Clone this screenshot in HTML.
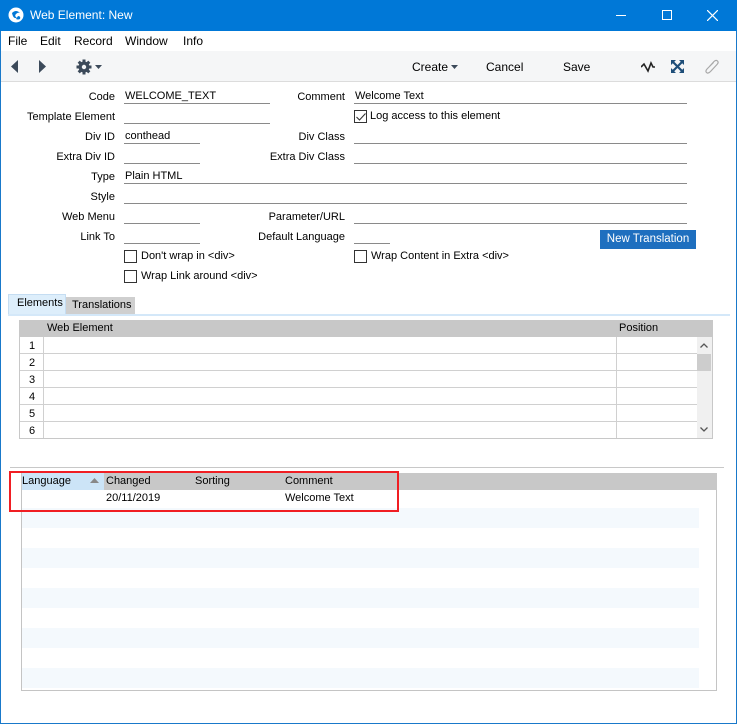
<!DOCTYPE html>
<html><head><meta charset="utf-8"><style>
*{margin:0;padding:0;box-sizing:border-box}
body{width:737px;height:724px;position:relative;overflow:hidden;background:#fff;font-family:"Liberation Sans",sans-serif;font-size:11px;color:#000}
.a{position:absolute;white-space:nowrap}
.lbl{position:absolute;text-align:right;white-space:nowrap;line-height:14px}
.f{position:absolute;border-bottom:1px solid #8a8a8a;height:14px;line-height:13px;padding-left:1px}
.cb{position:absolute;width:13px;height:13px;border:1px solid #333;background:#fff}
.hl{position:absolute;background:#c8c8c8}
</style></head><body>
<!-- window border -->
<div class="a" style="left:0;top:0;width:737px;height:724px;border:1px solid #1979ca"></div>
<!-- title -->
<div class="a" style="left:0;top:0;width:737px;height:31px;background:#0078d7"></div>
<svg class="a" style="left:8px;top:7px" width="16" height="16" viewBox="0 0 16 16"><circle cx="8" cy="8" r="7.5" fill="#fff"/><path d="M4 6 Q8 2 12 6 Q10 5 8 7 Q6 9 9 11 Q5 12 4 6Z" fill="#0078d7"/><path d="M10 9 Q13 9 12 12 Q10 13 8 12Z" fill="#0078d7"/></svg>
<div class="a" style="left:30px;top:8px;color:#fff;font-size:12px">Web Element: New</div>
<div class="a" style="left:616px;top:15px;width:10px;height:1px;background:#fff"></div>
<div class="a" style="left:662px;top:10px;width:10px;height:10px;border:1px solid #fff"></div>
<svg class="a" style="left:707px;top:10px" width="11" height="11"><path d="M0 0L11 11M11 0L0 11" stroke="#fff" stroke-width="1.2"/></svg>
<!-- menu -->
<div class="a" style="left:1px;top:31px;width:735px;height:20px;background:#fff"></div>
<div class="a" style="left:8px;top:34px;font-size:12px">File</div>
<div class="a" style="left:40px;top:34px;font-size:12px">Edit</div>
<div class="a" style="left:74px;top:34px;font-size:12px">Record</div>
<div class="a" style="left:125px;top:34px;font-size:12px">Window</div>
<div class="a" style="left:183px;top:34px;font-size:12px">Info</div>
<!-- toolbar -->
<div class="a" style="left:1px;top:51px;width:735px;height:31px;background:#f5f6f7;border-bottom:1px solid #dcdcdc"></div>
<svg class="a" style="left:11px;top:60px" width="8" height="13"><path d="M7 0V13L0 6.5Z" fill="#3c4a5a"/></svg>
<svg class="a" style="left:38px;top:60px" width="8" height="13"><path d="M1 0V13L8 6.5Z" fill="#3c4a5a"/></svg>
<svg class="a" style="left:76px;top:59px" width="16" height="16" viewBox="0 0 16 16"><circle cx="8" cy="8" r="5.5" fill="#3c4a5a"/><g stroke="#3c4a5a" stroke-width="3"><path d="M8 0.5V15.5M0.5 8H15.5M2.7 2.7L13.3 13.3M13.3 2.7L2.7 13.3"/></g><circle cx="8" cy="8" r="2.2" fill="#f5f6f7"/></svg>
<svg class="a" style="left:95px;top:65px" width="7" height="4"><path d="M0 0H7L3.5 4Z" fill="#3c4a5a"/></svg>
<div class="a" style="left:412px;top:60px;font-size:12px">Create</div>
<svg class="a" style="left:451px;top:65px" width="7" height="4"><path d="M0 0H7L3.5 4Z" fill="#3c4a5a"/></svg>
<div class="a" style="left:486px;top:60px;font-size:12px">Cancel</div>
<div class="a" style="left:563px;top:60px;font-size:12px">Save</div>
<svg class="a" style="left:641px;top:60px" width="14" height="13"><path d="M0 7L3 4L7 11L10 3L12 7H14" stroke="#222" stroke-width="1.6" fill="none"/></svg>
<svg class="a" style="left:671px;top:60px" width="13" height="13"><path d="M0 0H5L0 5ZM13 0V5L8 0ZM0 13V8L5 13ZM13 13H8L13 8Z" fill="#1e4e79"/><path d="M2 2L11 11M11 2L2 11" stroke="#1e4e79" stroke-width="2.2"/></svg>
<svg class="a" style="left:705px;top:58px" width="14" height="17" viewBox="0 0 14 17"><path d="M4 9L9 3.5Q11 1.5 12.5 3Q14 4.5 12 6.5L5.5 13.5Q3 16 1.5 14.5Q0 13 2.5 10.5L8.5 4.5" stroke="#a8a8a8" stroke-width="1.2" fill="none"/></svg>
<!-- form left -->
<div class="lbl" style="right:622px;top:90px">Code</div><div class="f" style="left:124px;top:90px;width:146px">WELCOME_TEXT</div>
<div class="lbl" style="right:622px;top:110px">Template Element</div><div class="f" style="left:124px;top:110px;width:146px"></div>
<div class="lbl" style="right:622px;top:130px">Div ID</div><div class="f" style="left:124px;top:130px;width:76px">conthead</div>
<div class="lbl" style="right:622px;top:150px">Extra Div ID</div><div class="f" style="left:124px;top:150px;width:76px"></div>
<div class="lbl" style="right:622px;top:170px">Type</div><div class="f" style="left:124px;top:170px;width:563px">Plain HTML</div>
<div class="lbl" style="right:622px;top:190px">Style</div><div class="f" style="left:124px;top:190px;width:563px"></div>
<div class="lbl" style="right:622px;top:210px">Web Menu</div><div class="f" style="left:124px;top:210px;width:76px"></div>
<div class="lbl" style="right:622px;top:230px">Link To</div><div class="f" style="left:124px;top:230px;width:76px"></div>
<div class="cb" style="left:124px;top:250px"></div><div class="a" style="left:141px;top:250px">Don't wrap in &lt;div&gt;</div>
<div class="cb" style="left:124px;top:270px"></div><div class="a" style="left:141px;top:270px">Wrap Link around &lt;div&gt;</div>
<!-- form right -->
<div class="lbl" style="right:392px;top:90px">Comment</div><div class="f" style="left:354px;top:90px;width:333px">Welcome Text</div>
<div class="cb" style="left:354px;top:110px"></div>
<svg class="a" style="left:356px;top:113px" width="10" height="8"><path d="M0.5 4L3.5 7L9.5 0.5" stroke="#333" stroke-width="1.1" fill="none"/></svg>
<div class="a" style="left:370px;top:110px">Log access to this element</div>
<div class="lbl" style="right:392px;top:130px">Div Class</div><div class="f" style="left:354px;top:130px;width:333px"></div>
<div class="lbl" style="right:392px;top:150px">Extra Div Class</div><div class="f" style="left:354px;top:150px;width:333px"></div>
<div class="lbl" style="right:392px;top:210px">Parameter/URL</div><div class="f" style="left:354px;top:210px;width:333px"></div>
<div class="lbl" style="right:392px;top:230px">Default Language</div><div class="f" style="left:354px;top:230px;width:36px"></div>
<div class="cb" style="left:354px;top:250px"></div><div class="a" style="left:371px;top:250px">Wrap Content in Extra &lt;div&gt;</div>
<div class="a" style="left:600px;top:230px;width:96px;height:19px;background:#1e6fbf;color:#fff;text-align:center;line-height:18px;font-size:11.5px">New Translation</div>
<!-- tabs -->
<div class="a" style="left:8px;top:294px;width:58px;height:20px;background:#ddeefb;border:1px solid #c5ddf2;border-bottom:none;padding:2px 0 0 8px">Elements</div>
<div class="a" style="left:66px;top:297px;width:69px;height:17px;background:#cfcfcf;padding:2px 0 0 6px">Translations</div>
<div class="a" style="left:8px;top:314px;width:722px;height:2px;background:#d4e8f9"></div>
<!-- grid1 -->
<div class="a" style="left:19px;top:320px;width:694px;height:119px;border:1px solid #c8c8c8;background:#fff"></div>
<div class="hl" style="left:19px;top:320px;width:694px;height:17px"></div>
<div class="a" style="left:47px;top:322px">Web Element</div>
<div class="a" style="left:619px;top:322px">Position</div>
<div class="a" style="left:697px;top:337px;width:15px;height:101px;background:#f0f0f0"></div>
<div class="a" style="left:697px;top:354px;width:14px;height:17px;background:#cdcdcd"></div>
<svg class="a" style="left:700px;top:343px" width="8" height="5"><path d="M0.5 4.5L4 1L7.5 4.5" stroke="#555" stroke-width="1.3" fill="none"/></svg>
<svg class="a" style="left:700px;top:427px" width="8" height="5"><path d="M0.5 0.5L4 4L7.5 0.5" stroke="#555" stroke-width="1.3" fill="none"/></svg>
<div class="a" style="left:43px;top:337px;width:1px;height:101px;background:#d0d0d0"></div>
<div class="a" style="left:616px;top:337px;width:1px;height:101px;background:#d0d0d0"></div>
<div class="a" style="left:20px;top:353px;width:677px;height:1px;background:#d0d0d0"></div>
<div class="a" style="left:20px;top:370px;width:677px;height:1px;background:#d0d0d0"></div>
<div class="a" style="left:20px;top:387px;width:677px;height:1px;background:#d0d0d0"></div>
<div class="a" style="left:20px;top:404px;width:677px;height:1px;background:#d0d0d0"></div>
<div class="a" style="left:20px;top:421px;width:677px;height:1px;background:#d0d0d0"></div>
<div class="a" style="left:29px;top:340px">1</div>
<div class="a" style="left:29px;top:357px">2</div>
<div class="a" style="left:29px;top:374px">3</div>
<div class="a" style="left:29px;top:391px">4</div>
<div class="a" style="left:29px;top:408px">5</div>
<div class="a" style="left:29px;top:425px">6</div>
<!-- separator -->
<div class="a" style="left:10px;top:467px;width:714px;height:1px;background:#c8c8c8"></div>
<!-- grid2 -->
<div class="a" style="left:21px;top:473px;width:696px;height:218px;border:1px solid #c4c4c4;border-top:none;background:#fff"></div>
<div class="hl" style="left:21px;top:473px;width:696px;height:17px"></div>
<div class="a" style="left:22px;top:473px;width:82px;height:17px;background:#cce4f7"></div>
<svg class="a" style="left:90px;top:478px" width="9" height="5"><path d="M0 5H9L4.5 0Z" fill="#888"/></svg>
<div class="a" style="left:22px;top:475px">Language</div>
<div class="a" style="left:106px;top:475px">Changed</div>
<div class="a" style="left:195px;top:475px">Sorting</div>
<div class="a" style="left:285px;top:475px">Comment</div>
<div class="a" style="left:106px;top:492px">20/11/2019</div>
<div class="a" style="left:285px;top:492px">Welcome Text</div>
<div class="a" style="left:22px;top:508px;width:677px;height:20px;background:#f4f9fd"></div>
<div class="a" style="left:22px;top:548px;width:677px;height:20px;background:#f4f9fd"></div>
<div class="a" style="left:22px;top:588px;width:677px;height:20px;background:#f4f9fd"></div>
<div class="a" style="left:22px;top:628px;width:677px;height:20px;background:#f4f9fd"></div>
<div class="a" style="left:22px;top:668px;width:677px;height:20px;background:#f4f9fd"></div>
<!-- red box -->
<div class="a" style="left:9px;top:471px;width:390px;height:41px;border:2px solid #f01e23"></div>
</body></html>
